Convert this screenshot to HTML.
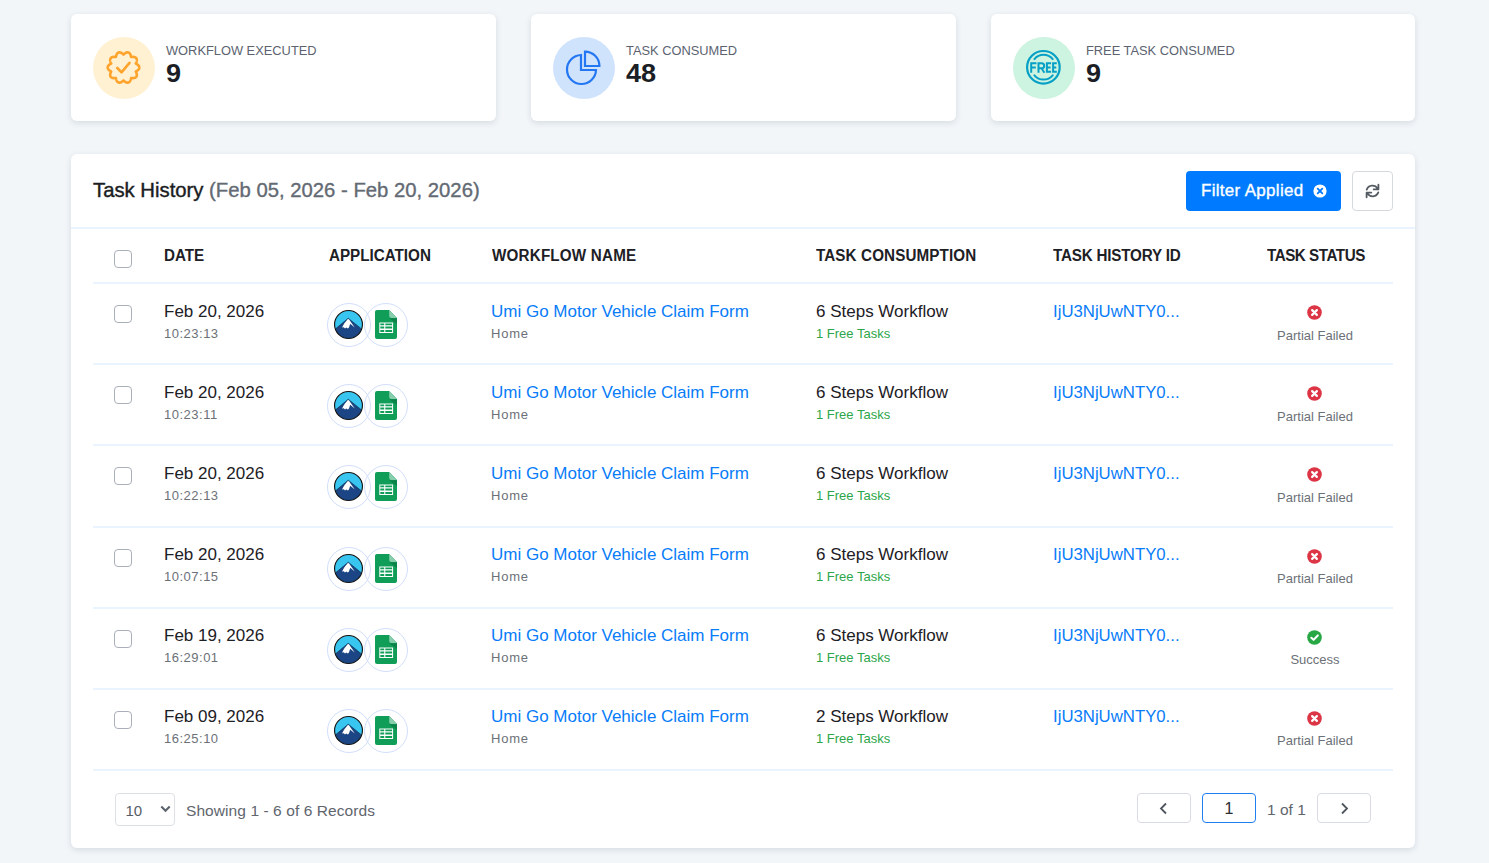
<!DOCTYPE html>
<html><head><meta charset="utf-8"><style>
*{margin:0;padding:0;box-sizing:border-box}
html,body{width:1489px;height:863px;overflow:hidden;background:#f2f6f9;font-family:"Liberation Sans",sans-serif;color:#212529}
.card{position:absolute;background:#fff;border-radius:6px;box-shadow:0 2px 6px rgba(30,45,70,.13)}
.stat{top:14px;width:425px;height:107px}
.ic{position:absolute;left:22px;top:23px;width:62px;height:62px;border-radius:50%}
.ic svg{position:absolute;left:0;top:0}
.lbl{position:absolute;left:95px;top:29px;font-size:12.85px;color:#5b6370;white-space:nowrap}
.val{position:absolute;left:95px;top:45px;transform:scaleX(1.05);transform-origin:0 0;font-size:25.8px;font-weight:bold;color:#1b1e24}
.main{left:71px;top:154px;width:1344px;height:694px}
.title{position:absolute;left:22px;top:24.5px;font-size:20.3px;color:#1a1d22;white-space:nowrap;-webkit-text-stroke:.4px #1a1d22}
.title span{color:#636a73;-webkit-text-stroke:.35px #636a73}
.fbtn{position:absolute;left:1115px;top:17px;width:155px;height:40px;background:#007bff;border-radius:4px;color:#fff;font-size:17px}
.fbtn .tx{position:absolute;left:15px;top:10px;white-space:nowrap;letter-spacing:.3px;-webkit-text-stroke:.35px #fff}
.rbtn{position:absolute;left:1281px;top:17px;width:41px;height:40px;border:1px solid #d6d9de;border-radius:4px}
.hline{position:absolute;left:0;top:73px;width:1344px;height:2px;background:#eaf4fe}
.th{position:absolute;top:93.2px;transform:scaleX(.95);transform-origin:0 0;font-size:16px;font-weight:bold;color:#1d2025;white-space:nowrap}
.cb{position:absolute;width:18px;height:18px;border:1.5px solid #a9b0b9;border-radius:4px;background:#fff}
.row{position:absolute;left:0;width:1344px;height:81px}
.rl{position:absolute;left:22px;width:1300px;height:2px;background:#eaf4fe}
.hdrline{position:absolute;left:22px;top:128px;width:1300px;height:2px;background:#eaf4fe}
.t1{position:absolute;top:19px;font-size:17px;color:#1d2025;white-space:nowrap}
.t2{position:absolute;top:43px;font-size:13px;color:#6c7178;white-space:nowrap}
.tm{letter-spacing:.5px}
.hm{letter-spacing:.8px}
.lnk{color:#087cf9}
.id{font-size:16.75px}
.grn{color:#2ca64a}
.ac{position:absolute;top:20px;width:44px;height:44px;border:1.2px solid #d2defb;border-radius:50%;display:flex;align-items:center;justify-content:center}
.ac svg{display:block}
.ac i{display:block}
.st{position:absolute;left:1236px;top:22px;width:15px;height:15px}
.st svg{display:block}
.stl{position:absolute;left:1144px;width:200px;text-align:center;top:45px;font-size:13px;color:#6c7178}
.sel{position:absolute;left:44px;top:639px;width:60px;height:33px;border:1px solid #dde1e6;border-radius:4px;font-size:15px;color:#565d66}
.pg{position:absolute;top:639px;width:54px;height:30px;border:1px solid #d9dce8;border-radius:4px}
</style></head><body>
<div class="card stat" style="left:71px">
 <div class="ic" style="background:#fff1d2"><svg width="62" height="62" viewBox="0 0 62 62"><g transform="translate(12.5,12.5)"><path d="M18.00 5.10 L18.21 4.93 L18.42 4.73 L18.64 4.53 L18.86 4.33 L19.09 4.13 L19.33 3.95 L19.57 3.77 L19.82 3.60 L20.07 3.44 L20.33 3.30 L20.59 3.18 L20.85 3.07 L21.11 2.99 L21.37 2.92 L21.63 2.87 L21.89 2.85 L22.15 2.84 L22.40 2.87 L22.64 2.91 L22.88 2.97 L23.11 3.06 L23.34 3.17 L23.55 3.30 L23.76 3.45 L23.95 3.63 L24.14 3.82 L24.31 4.02 L24.47 4.25 L24.62 4.49 L24.76 4.74 L24.88 5.01 L24.99 5.28 L25.09 5.56 L25.19 5.85 L25.27 6.14 L25.34 6.44 L25.40 6.73 L25.46 7.02 L25.52 7.30 L25.58 7.56 L25.85 7.54 L26.14 7.51 L26.43 7.48 L26.73 7.45 L27.03 7.42 L27.34 7.41 L27.64 7.41 L27.94 7.42 L28.23 7.44 L28.52 7.48 L28.80 7.53 L29.08 7.60 L29.34 7.68 L29.59 7.78 L29.83 7.90 L30.05 8.03 L30.26 8.18 L30.45 8.34 L30.63 8.52 L30.78 8.71 L30.92 8.92 L31.04 9.14 L31.13 9.37 L31.21 9.62 L31.27 9.87 L31.30 10.13 L31.32 10.40 L31.32 10.68 L31.30 10.96 L31.26 11.24 L31.20 11.53 L31.13 11.82 L31.05 12.11 L30.96 12.39 L30.85 12.68 L30.74 12.96 L30.61 13.23 L30.49 13.50 L30.37 13.76 L30.27 14.01 L30.50 14.16 L30.75 14.30 L31.01 14.44 L31.27 14.59 L31.52 14.75 L31.78 14.92 L32.02 15.10 L32.26 15.28 L32.48 15.47 L32.70 15.67 L32.90 15.88 L33.08 16.10 L33.24 16.32 L33.39 16.55 L33.51 16.78 L33.61 17.02 L33.69 17.26 L33.75 17.50 L33.79 17.75 L33.80 18.00 L33.79 18.25 L33.75 18.50 L33.69 18.74 L33.61 18.98 L33.51 19.22 L33.39 19.45 L33.24 19.68 L33.08 19.90 L32.90 20.12 L32.70 20.33 L32.48 20.53 L32.26 20.72 L32.02 20.90 L31.78 21.08 L31.52 21.25 L31.27 21.41 L31.01 21.56 L30.75 21.70 L30.50 21.84 L30.27 21.99 L30.37 22.24 L30.49 22.50 L30.61 22.77 L30.74 23.04 L30.85 23.32 L30.96 23.61 L31.05 23.89 L31.13 24.18 L31.20 24.47 L31.26 24.76 L31.30 25.04 L31.32 25.32 L31.32 25.60 L31.30 25.87 L31.27 26.13 L31.21 26.38 L31.13 26.63 L31.04 26.86 L30.92 27.08 L30.78 27.29 L30.63 27.48 L30.45 27.66 L30.26 27.82 L30.05 27.97 L29.83 28.10 L29.59 28.22 L29.34 28.32 L29.08 28.40 L28.80 28.47 L28.52 28.52 L28.23 28.56 L27.94 28.58 L27.64 28.59 L27.34 28.59 L27.03 28.58 L26.73 28.55 L26.43 28.52 L26.14 28.49 L25.85 28.46 L25.58 28.44 L25.52 28.70 L25.46 28.98 L25.40 29.27 L25.34 29.56 L25.27 29.86 L25.19 30.15 L25.09 30.44 L24.99 30.72 L24.88 30.99 L24.76 31.26 L24.62 31.51 L24.47 31.75 L24.31 31.98 L24.14 32.18 L23.95 32.37 L23.76 32.55 L23.55 32.70 L23.34 32.83 L23.11 32.94 L22.88 33.03 L22.64 33.09 L22.40 33.13 L22.15 33.16 L21.89 33.15 L21.63 33.13 L21.37 33.08 L21.11 33.01 L20.85 32.93 L20.59 32.82 L20.33 32.70 L20.07 32.56 L19.82 32.40 L19.57 32.23 L19.33 32.05 L19.09 31.87 L18.86 31.67 L18.64 31.47 L18.42 31.27 L18.21 31.07 L18.00 30.90 L17.79 31.07 L17.58 31.27 L17.36 31.47 L17.14 31.67 L16.91 31.87 L16.67 32.05 L16.43 32.23 L16.18 32.40 L15.93 32.56 L15.67 32.70 L15.41 32.82 L15.15 32.93 L14.89 33.01 L14.63 33.08 L14.37 33.13 L14.11 33.15 L13.85 33.16 L13.60 33.13 L13.36 33.09 L13.12 33.03 L12.89 32.94 L12.66 32.83 L12.45 32.70 L12.24 32.55 L12.05 32.37 L11.86 32.18 L11.69 31.98 L11.53 31.75 L11.38 31.51 L11.24 31.26 L11.12 30.99 L11.01 30.72 L10.91 30.44 L10.81 30.15 L10.73 29.86 L10.66 29.56 L10.60 29.27 L10.54 28.98 L10.48 28.70 L10.42 28.44 L10.15 28.46 L9.86 28.49 L9.57 28.52 L9.27 28.55 L8.97 28.58 L8.66 28.59 L8.36 28.59 L8.06 28.58 L7.77 28.56 L7.48 28.52 L7.20 28.47 L6.92 28.40 L6.66 28.32 L6.41 28.22 L6.17 28.10 L5.95 27.97 L5.74 27.82 L5.55 27.66 L5.37 27.48 L5.22 27.29 L5.08 27.08 L4.96 26.86 L4.87 26.63 L4.79 26.38 L4.73 26.13 L4.70 25.87 L4.68 25.60 L4.68 25.32 L4.70 25.04 L4.74 24.76 L4.80 24.47 L4.87 24.18 L4.95 23.89 L5.04 23.61 L5.15 23.32 L5.26 23.04 L5.39 22.77 L5.51 22.50 L5.63 22.24 L5.73 21.99 L5.50 21.84 L5.25 21.70 L4.99 21.56 L4.73 21.41 L4.48 21.25 L4.22 21.08 L3.98 20.90 L3.74 20.72 L3.52 20.53 L3.30 20.33 L3.10 20.12 L2.92 19.90 L2.76 19.68 L2.61 19.45 L2.49 19.22 L2.39 18.98 L2.31 18.74 L2.25 18.50 L2.21 18.25 L2.20 18.00 L2.21 17.75 L2.25 17.50 L2.31 17.26 L2.39 17.02 L2.49 16.78 L2.61 16.55 L2.76 16.32 L2.92 16.10 L3.10 15.88 L3.30 15.67 L3.52 15.47 L3.74 15.28 L3.98 15.10 L4.22 14.92 L4.48 14.75 L4.73 14.59 L4.99 14.44 L5.25 14.30 L5.50 14.16 L5.73 14.01 L5.63 13.76 L5.51 13.50 L5.39 13.23 L5.26 12.96 L5.15 12.68 L5.04 12.39 L4.95 12.11 L4.87 11.82 L4.80 11.53 L4.74 11.24 L4.70 10.96 L4.68 10.68 L4.68 10.40 L4.70 10.13 L4.73 9.87 L4.79 9.62 L4.87 9.37 L4.96 9.14 L5.08 8.92 L5.22 8.71 L5.37 8.52 L5.55 8.34 L5.74 8.18 L5.95 8.03 L6.17 7.90 L6.41 7.78 L6.66 7.68 L6.92 7.60 L7.20 7.53 L7.48 7.48 L7.77 7.44 L8.06 7.42 L8.36 7.41 L8.66 7.41 L8.97 7.42 L9.27 7.45 L9.57 7.48 L9.86 7.51 L10.15 7.54 L10.42 7.56 L10.48 7.30 L10.54 7.02 L10.60 6.73 L10.66 6.44 L10.73 6.14 L10.81 5.85 L10.91 5.56 L11.01 5.28 L11.12 5.01 L11.24 4.74 L11.38 4.49 L11.53 4.25 L11.69 4.02 L11.86 3.82 L12.05 3.63 L12.24 3.45 L12.45 3.30 L12.66 3.17 L12.89 3.06 L13.12 2.97 L13.36 2.91 L13.60 2.87 L13.85 2.84 L14.11 2.85 L14.37 2.87 L14.63 2.92 L14.89 2.99 L15.15 3.07 L15.41 3.18 L15.67 3.30 L15.93 3.44 L16.18 3.60 L16.43 3.77 L16.67 3.95 L16.91 4.13 L17.14 4.33 L17.36 4.53 L17.58 4.73 L17.79 4.93 L18.00 5.10Z" fill="none" stroke="#fea42c" stroke-width="2.6" stroke-linejoin="round"/><path d="M11.8 18.5 L16 22.9 L24 13.3" fill="none" stroke="#fea42c" stroke-width="2.6" stroke-linecap="round" stroke-linejoin="round"/></g></svg></div>
 <div class="lbl">WORKFLOW EXECUTED</div><div class="val">9</div>
</div>
<div class="card stat" style="left:531px">
 <div class="ic" style="background:#d0e3fd"><svg width="62" height="62" viewBox="0 0 62 62"><path d="M28 18 A14.5 14.5 0 1 0 43 33 H28 Z" fill="none" stroke="#2477f2" stroke-width="2.2" stroke-linejoin="miter"/><path d="M32 14.6 A14.4 14.4 0 0 1 46.4 29 H32 Z" fill="none" stroke="#2477f2" stroke-width="2.2"/></svg></div>
 <div class="lbl">TASK CONSUMED</div><div class="val">48</div>
</div>
<div class="card stat" style="left:991px;width:424px">
 <div class="ic" style="background:#cdf3e1"><svg width="62" height="62" viewBox="0 0 62 62"><circle cx="30.4" cy="30.3" r="16.3" fill="none" stroke="#06a0c6" stroke-width="2.2"/><path d="M21.4 22.1 A12 12 0 0 1 39.7 22.1" fill="none" stroke="#06a0c6" stroke-width="2" stroke-linecap="round"/><path d="M21.4 38.3 A12 12 0 0 0 39.7 38.3" fill="none" stroke="#06a0c6" stroke-width="2" stroke-linecap="round"/><path d="M18.2 35.7 V26.2 H23.5 M18.2 30.6 H22.8 M25.5 35.7 V26.2 H28.6 Q31.2 26.2 31.2 28.7 Q31.2 31.2 28.6 31.2 H25.5 M28.6 31.2 L31.4 35.7 M38.1 26.2 H33.9 V34.7 H38.1 M33.9 30.5 H37.6 M43.8 26.2 H40.1 V34.7 H43.8 M40.1 30.5 H43.3" fill="none" stroke="#06a0c6" stroke-width="2"/></svg></div>
 <div class="lbl">FREE TASK CONSUMED</div><div class="val">9</div>
</div>
<div class="card main">
 <div class="title">Task History <span>(Feb 05, 2026 - Feb 20, 2026)</span></div>
 <div class="fbtn"><span class="tx">Filter Applied</span><svg style="position:absolute;left:127px;top:13px" width="14" height="14" viewBox="0 0 14 14"><circle cx="7" cy="7" r="6.6" fill="#fff"/><path d="M4.7 4.7 L9.3 9.3 M9.3 4.7 L4.7 9.3" stroke="#007bff" stroke-width="1.8" stroke-linecap="round"/></svg></div>
 <div class="rbtn"><svg style="position:absolute;left:7px;top:6px" width="26" height="26" viewBox="0 0 26 26"><path d="M6.7 11.6 A6.1 6.1 0 0 1 17.6 10.6 M18.4 6.7 V11.4 H13.7 M18.3 14.4 A6.1 6.1 0 0 1 7.4 15.4 M6.6 19.3 V14.6 H11.3" fill="none" stroke="#555b63" stroke-width="1.8" stroke-linecap="round" stroke-linejoin="round"/></svg></div>
 <div class="hline"></div>
 <div class="cb" style="left:43px;top:96px"></div>
 <div class="th" style="left:93px">DATE</div>
 <div class="th" style="left:258px">APPLICATION</div>
 <div class="th" style="left:421px;letter-spacing:.2px">WORKFLOW NAME</div>
 <div class="th" style="left:745px;letter-spacing:.12px">TASK CONSUMPTION</div>
 <div class="th" style="left:982px;letter-spacing:-.2px">TASK HISTORY ID</div>
 <div class="th" style="left:1196px;letter-spacing:-.5px">TASK STATUS</div>
 <div class="hdrline"></div>
</div>
<div style="position:absolute;left:71px;top:0;width:1344px;height:863px">
<div class="rl" style="top:363px"></div><div class="row" style="top:283px">
<div class="cb" style="left:43px;top:22px"></div>
<div class="t1" style="left:93px">Feb 20, 2026</div><div class="t2 tm" style="left:93px">10:23:13</div>
<span class="ac" style="left:255.75px;top:20px"><i style="position:relative;left:-.6px;top:-.9px"><svg width="29" height="29" viewBox="0 0 28.5 28.5"><defs><clipPath id="mc0"><circle cx="14.25" cy="14.25" r="13.6"/></clipPath></defs><g clip-path="url(#mc0)"><rect width="29" height="29" fill="#38c6f1"/><path d="M-1 20.6 L14 8.1 L29.5 20.6 V30 H-1Z" fill="#1b4584"/><path d="M-1 20.6 L14 8.1 L29.5 20.6" fill="none" stroke="#0d2540" stroke-width=".6"/><path d="M13.8 8.6 L10.4 12.8 L9.2 14.7 L7.9 17.3 L9.6 16.9 L10.8 18.1 L12.0 17.1 L13.6 18.3 L14.7 17.3 L15.9 13.5 L18.3 15.5 L20.4 17.2 L16.7 12.0 L15.1 9.6Z" fill="#fff"/></g><circle cx="14.25" cy="14.25" r="13.7" fill="none" stroke="#111" stroke-width="1.1"/></svg></i></span><span class="ac" style="left:293.1px;top:20px"><i style="position:relative;left:-.6px;top:-.9px"><svg width="22" height="29" viewBox="0 0 22 29"><path d="M2 0 H14.2 L22 7.9 V27 a2 2 0 0 1 -2 2 H2 a2 2 0 0 1 -2 -2 V2 a2 2 0 0 1 2 -2Z" fill="#0f9d58"/><path d="M14.2 0 L22 7.9 H16.2 a2 2 0 0 1 -2 -2Z" fill="#87ceac"/><path d="M14.2 8.3 L22 14 V8.3Z" fill="#0b7a44" opacity=".75"/><path d="M4.3 12.4 H18.1 V23 H4.3Z M5.3 13.6 V15.3 H9.2 V13.6Z M10.3 13.6 V15.3 H17.1 V13.6Z M5.3 16.6 V18.6 H9.2 V16.6Z M10.3 16.6 V18.6 H17.1 V16.6Z M5.3 19.9 V21.9 H9.2 V19.9Z M10.3 19.9 V21.9 H17.1 V19.9Z" fill="#fff" fill-rule="evenodd"/></svg></i></span>
<div class="t1 lnk" style="left:420px">Umi Go Motor Vehicle Claim Form</div><div class="t2 hm" style="left:420px">Home</div>
<div class="t1" style="left:745px">6 Steps Workflow</div><div class="t2 grn" style="left:745px">1 Free Tasks</div>
<div class="t1 lnk id" style="left:982px">IjU3NjUwNTY0...</div>
<div class="st" style="top:22px"><svg width="15" height="15" viewBox="0 0 16 16"><circle cx="8" cy="8" r="7.8" fill="#dc3545"/><path d="M5.5 5.5 L10.5 10.5 M10.5 5.5 L5.5 10.5" stroke="#fff" stroke-width="2.4" stroke-linecap="round"/></svg></div><div class="stl">Partial Failed</div>
</div>
<div class="rl" style="top:444px"></div><div class="row" style="top:364px">
<div class="cb" style="left:43px;top:22px"></div>
<div class="t1" style="left:93px">Feb 20, 2026</div><div class="t2 tm" style="left:93px">10:23:11</div>
<span class="ac" style="left:255.75px;top:20px"><i style="position:relative;left:-.6px;top:-.9px"><svg width="29" height="29" viewBox="0 0 28.5 28.5"><defs><clipPath id="mc1"><circle cx="14.25" cy="14.25" r="13.6"/></clipPath></defs><g clip-path="url(#mc1)"><rect width="29" height="29" fill="#38c6f1"/><path d="M-1 20.6 L14 8.1 L29.5 20.6 V30 H-1Z" fill="#1b4584"/><path d="M-1 20.6 L14 8.1 L29.5 20.6" fill="none" stroke="#0d2540" stroke-width=".6"/><path d="M13.8 8.6 L10.4 12.8 L9.2 14.7 L7.9 17.3 L9.6 16.9 L10.8 18.1 L12.0 17.1 L13.6 18.3 L14.7 17.3 L15.9 13.5 L18.3 15.5 L20.4 17.2 L16.7 12.0 L15.1 9.6Z" fill="#fff"/></g><circle cx="14.25" cy="14.25" r="13.7" fill="none" stroke="#111" stroke-width="1.1"/></svg></i></span><span class="ac" style="left:293.1px;top:20px"><i style="position:relative;left:-.6px;top:-.9px"><svg width="22" height="29" viewBox="0 0 22 29"><path d="M2 0 H14.2 L22 7.9 V27 a2 2 0 0 1 -2 2 H2 a2 2 0 0 1 -2 -2 V2 a2 2 0 0 1 2 -2Z" fill="#0f9d58"/><path d="M14.2 0 L22 7.9 H16.2 a2 2 0 0 1 -2 -2Z" fill="#87ceac"/><path d="M14.2 8.3 L22 14 V8.3Z" fill="#0b7a44" opacity=".75"/><path d="M4.3 12.4 H18.1 V23 H4.3Z M5.3 13.6 V15.3 H9.2 V13.6Z M10.3 13.6 V15.3 H17.1 V13.6Z M5.3 16.6 V18.6 H9.2 V16.6Z M10.3 16.6 V18.6 H17.1 V16.6Z M5.3 19.9 V21.9 H9.2 V19.9Z M10.3 19.9 V21.9 H17.1 V19.9Z" fill="#fff" fill-rule="evenodd"/></svg></i></span>
<div class="t1 lnk" style="left:420px">Umi Go Motor Vehicle Claim Form</div><div class="t2 hm" style="left:420px">Home</div>
<div class="t1" style="left:745px">6 Steps Workflow</div><div class="t2 grn" style="left:745px">1 Free Tasks</div>
<div class="t1 lnk id" style="left:982px">IjU3NjUwNTY0...</div>
<div class="st" style="top:22px"><svg width="15" height="15" viewBox="0 0 16 16"><circle cx="8" cy="8" r="7.8" fill="#dc3545"/><path d="M5.5 5.5 L10.5 10.5 M10.5 5.5 L5.5 10.5" stroke="#fff" stroke-width="2.4" stroke-linecap="round"/></svg></div><div class="stl">Partial Failed</div>
</div>
<div class="rl" style="top:526px"></div><div class="row" style="top:445px">
<div class="cb" style="left:43px;top:22px"></div>
<div class="t1" style="left:93px">Feb 20, 2026</div><div class="t2 tm" style="left:93px">10:22:13</div>
<span class="ac" style="left:255.75px;top:20px"><i style="position:relative;left:-.6px;top:-.9px"><svg width="29" height="29" viewBox="0 0 28.5 28.5"><defs><clipPath id="mc2"><circle cx="14.25" cy="14.25" r="13.6"/></clipPath></defs><g clip-path="url(#mc2)"><rect width="29" height="29" fill="#38c6f1"/><path d="M-1 20.6 L14 8.1 L29.5 20.6 V30 H-1Z" fill="#1b4584"/><path d="M-1 20.6 L14 8.1 L29.5 20.6" fill="none" stroke="#0d2540" stroke-width=".6"/><path d="M13.8 8.6 L10.4 12.8 L9.2 14.7 L7.9 17.3 L9.6 16.9 L10.8 18.1 L12.0 17.1 L13.6 18.3 L14.7 17.3 L15.9 13.5 L18.3 15.5 L20.4 17.2 L16.7 12.0 L15.1 9.6Z" fill="#fff"/></g><circle cx="14.25" cy="14.25" r="13.7" fill="none" stroke="#111" stroke-width="1.1"/></svg></i></span><span class="ac" style="left:293.1px;top:20px"><i style="position:relative;left:-.6px;top:-.9px"><svg width="22" height="29" viewBox="0 0 22 29"><path d="M2 0 H14.2 L22 7.9 V27 a2 2 0 0 1 -2 2 H2 a2 2 0 0 1 -2 -2 V2 a2 2 0 0 1 2 -2Z" fill="#0f9d58"/><path d="M14.2 0 L22 7.9 H16.2 a2 2 0 0 1 -2 -2Z" fill="#87ceac"/><path d="M14.2 8.3 L22 14 V8.3Z" fill="#0b7a44" opacity=".75"/><path d="M4.3 12.4 H18.1 V23 H4.3Z M5.3 13.6 V15.3 H9.2 V13.6Z M10.3 13.6 V15.3 H17.1 V13.6Z M5.3 16.6 V18.6 H9.2 V16.6Z M10.3 16.6 V18.6 H17.1 V16.6Z M5.3 19.9 V21.9 H9.2 V19.9Z M10.3 19.9 V21.9 H17.1 V19.9Z" fill="#fff" fill-rule="evenodd"/></svg></i></span>
<div class="t1 lnk" style="left:420px">Umi Go Motor Vehicle Claim Form</div><div class="t2 hm" style="left:420px">Home</div>
<div class="t1" style="left:745px">6 Steps Workflow</div><div class="t2 grn" style="left:745px">1 Free Tasks</div>
<div class="t1 lnk id" style="left:982px">IjU3NjUwNTY0...</div>
<div class="st" style="top:22px"><svg width="15" height="15" viewBox="0 0 16 16"><circle cx="8" cy="8" r="7.8" fill="#dc3545"/><path d="M5.5 5.5 L10.5 10.5 M10.5 5.5 L5.5 10.5" stroke="#fff" stroke-width="2.4" stroke-linecap="round"/></svg></div><div class="stl">Partial Failed</div>
</div>
<div class="rl" style="top:607px"></div><div class="row" style="top:526px">
<div class="cb" style="left:43px;top:23px"></div>
<div class="t1" style="left:93px">Feb 20, 2026</div><div class="t2 tm" style="left:93px">10:07:15</div>
<span class="ac" style="left:255.75px;top:21px"><i style="position:relative;left:-.6px;top:-.9px"><svg width="29" height="29" viewBox="0 0 28.5 28.5"><defs><clipPath id="mc3"><circle cx="14.25" cy="14.25" r="13.6"/></clipPath></defs><g clip-path="url(#mc3)"><rect width="29" height="29" fill="#38c6f1"/><path d="M-1 20.6 L14 8.1 L29.5 20.6 V30 H-1Z" fill="#1b4584"/><path d="M-1 20.6 L14 8.1 L29.5 20.6" fill="none" stroke="#0d2540" stroke-width=".6"/><path d="M13.8 8.6 L10.4 12.8 L9.2 14.7 L7.9 17.3 L9.6 16.9 L10.8 18.1 L12.0 17.1 L13.6 18.3 L14.7 17.3 L15.9 13.5 L18.3 15.5 L20.4 17.2 L16.7 12.0 L15.1 9.6Z" fill="#fff"/></g><circle cx="14.25" cy="14.25" r="13.7" fill="none" stroke="#111" stroke-width="1.1"/></svg></i></span><span class="ac" style="left:293.1px;top:21px"><i style="position:relative;left:-.6px;top:-.9px"><svg width="22" height="29" viewBox="0 0 22 29"><path d="M2 0 H14.2 L22 7.9 V27 a2 2 0 0 1 -2 2 H2 a2 2 0 0 1 -2 -2 V2 a2 2 0 0 1 2 -2Z" fill="#0f9d58"/><path d="M14.2 0 L22 7.9 H16.2 a2 2 0 0 1 -2 -2Z" fill="#87ceac"/><path d="M14.2 8.3 L22 14 V8.3Z" fill="#0b7a44" opacity=".75"/><path d="M4.3 12.4 H18.1 V23 H4.3Z M5.3 13.6 V15.3 H9.2 V13.6Z M10.3 13.6 V15.3 H17.1 V13.6Z M5.3 16.6 V18.6 H9.2 V16.6Z M10.3 16.6 V18.6 H17.1 V16.6Z M5.3 19.9 V21.9 H9.2 V19.9Z M10.3 19.9 V21.9 H17.1 V19.9Z" fill="#fff" fill-rule="evenodd"/></svg></i></span>
<div class="t1 lnk" style="left:420px">Umi Go Motor Vehicle Claim Form</div><div class="t2 hm" style="left:420px">Home</div>
<div class="t1" style="left:745px">6 Steps Workflow</div><div class="t2 grn" style="left:745px">1 Free Tasks</div>
<div class="t1 lnk id" style="left:982px">IjU3NjUwNTY0...</div>
<div class="st" style="top:23px"><svg width="15" height="15" viewBox="0 0 16 16"><circle cx="8" cy="8" r="7.8" fill="#dc3545"/><path d="M5.5 5.5 L10.5 10.5 M10.5 5.5 L5.5 10.5" stroke="#fff" stroke-width="2.4" stroke-linecap="round"/></svg></div><div class="stl">Partial Failed</div>
</div>
<div class="rl" style="top:688px"></div><div class="row" style="top:607px">
<div class="cb" style="left:43px;top:23px"></div>
<div class="t1" style="left:93px">Feb 19, 2026</div><div class="t2 tm" style="left:93px">16:29:01</div>
<span class="ac" style="left:255.75px;top:21px"><i style="position:relative;left:-.6px;top:-.9px"><svg width="29" height="29" viewBox="0 0 28.5 28.5"><defs><clipPath id="mc4"><circle cx="14.25" cy="14.25" r="13.6"/></clipPath></defs><g clip-path="url(#mc4)"><rect width="29" height="29" fill="#38c6f1"/><path d="M-1 20.6 L14 8.1 L29.5 20.6 V30 H-1Z" fill="#1b4584"/><path d="M-1 20.6 L14 8.1 L29.5 20.6" fill="none" stroke="#0d2540" stroke-width=".6"/><path d="M13.8 8.6 L10.4 12.8 L9.2 14.7 L7.9 17.3 L9.6 16.9 L10.8 18.1 L12.0 17.1 L13.6 18.3 L14.7 17.3 L15.9 13.5 L18.3 15.5 L20.4 17.2 L16.7 12.0 L15.1 9.6Z" fill="#fff"/></g><circle cx="14.25" cy="14.25" r="13.7" fill="none" stroke="#111" stroke-width="1.1"/></svg></i></span><span class="ac" style="left:293.1px;top:21px"><i style="position:relative;left:-.6px;top:-.9px"><svg width="22" height="29" viewBox="0 0 22 29"><path d="M2 0 H14.2 L22 7.9 V27 a2 2 0 0 1 -2 2 H2 a2 2 0 0 1 -2 -2 V2 a2 2 0 0 1 2 -2Z" fill="#0f9d58"/><path d="M14.2 0 L22 7.9 H16.2 a2 2 0 0 1 -2 -2Z" fill="#87ceac"/><path d="M14.2 8.3 L22 14 V8.3Z" fill="#0b7a44" opacity=".75"/><path d="M4.3 12.4 H18.1 V23 H4.3Z M5.3 13.6 V15.3 H9.2 V13.6Z M10.3 13.6 V15.3 H17.1 V13.6Z M5.3 16.6 V18.6 H9.2 V16.6Z M10.3 16.6 V18.6 H17.1 V16.6Z M5.3 19.9 V21.9 H9.2 V19.9Z M10.3 19.9 V21.9 H17.1 V19.9Z" fill="#fff" fill-rule="evenodd"/></svg></i></span>
<div class="t1 lnk" style="left:420px">Umi Go Motor Vehicle Claim Form</div><div class="t2 hm" style="left:420px">Home</div>
<div class="t1" style="left:745px">6 Steps Workflow</div><div class="t2 grn" style="left:745px">1 Free Tasks</div>
<div class="t1 lnk id" style="left:982px">IjU3NjUwNTY0...</div>
<div class="st" style="top:23px"><svg width="15" height="15" viewBox="0 0 16 16"><circle cx="8" cy="8" r="7.8" fill="#28a745"/><path d="M4.6 8.3 L7 10.5 L11.5 5.8" stroke="#fff" stroke-width="2.2" fill="none" stroke-linecap="round" stroke-linejoin="round"/></svg></div><div class="stl">Success</div>
</div>
<div class="rl" style="top:769px"></div><div class="row" style="top:688px">
<div class="cb" style="left:43px;top:23px"></div>
<div class="t1" style="left:93px">Feb 09, 2026</div><div class="t2 tm" style="left:93px">16:25:10</div>
<span class="ac" style="left:255.75px;top:21px"><i style="position:relative;left:-.6px;top:-.9px"><svg width="29" height="29" viewBox="0 0 28.5 28.5"><defs><clipPath id="mc5"><circle cx="14.25" cy="14.25" r="13.6"/></clipPath></defs><g clip-path="url(#mc5)"><rect width="29" height="29" fill="#38c6f1"/><path d="M-1 20.6 L14 8.1 L29.5 20.6 V30 H-1Z" fill="#1b4584"/><path d="M-1 20.6 L14 8.1 L29.5 20.6" fill="none" stroke="#0d2540" stroke-width=".6"/><path d="M13.8 8.6 L10.4 12.8 L9.2 14.7 L7.9 17.3 L9.6 16.9 L10.8 18.1 L12.0 17.1 L13.6 18.3 L14.7 17.3 L15.9 13.5 L18.3 15.5 L20.4 17.2 L16.7 12.0 L15.1 9.6Z" fill="#fff"/></g><circle cx="14.25" cy="14.25" r="13.7" fill="none" stroke="#111" stroke-width="1.1"/></svg></i></span><span class="ac" style="left:293.1px;top:21px"><i style="position:relative;left:-.6px;top:-.9px"><svg width="22" height="29" viewBox="0 0 22 29"><path d="M2 0 H14.2 L22 7.9 V27 a2 2 0 0 1 -2 2 H2 a2 2 0 0 1 -2 -2 V2 a2 2 0 0 1 2 -2Z" fill="#0f9d58"/><path d="M14.2 0 L22 7.9 H16.2 a2 2 0 0 1 -2 -2Z" fill="#87ceac"/><path d="M14.2 8.3 L22 14 V8.3Z" fill="#0b7a44" opacity=".75"/><path d="M4.3 12.4 H18.1 V23 H4.3Z M5.3 13.6 V15.3 H9.2 V13.6Z M10.3 13.6 V15.3 H17.1 V13.6Z M5.3 16.6 V18.6 H9.2 V16.6Z M10.3 16.6 V18.6 H17.1 V16.6Z M5.3 19.9 V21.9 H9.2 V19.9Z M10.3 19.9 V21.9 H17.1 V19.9Z" fill="#fff" fill-rule="evenodd"/></svg></i></span>
<div class="t1 lnk" style="left:420px">Umi Go Motor Vehicle Claim Form</div><div class="t2 hm" style="left:420px">Home</div>
<div class="t1" style="left:745px">2 Steps Workflow</div><div class="t2 grn" style="left:745px">1 Free Tasks</div>
<div class="t1 lnk id" style="left:982px">IjU3NjUwNTY0...</div>
<div class="st" style="top:23px"><svg width="15" height="15" viewBox="0 0 16 16"><circle cx="8" cy="8" r="7.8" fill="#dc3545"/><path d="M5.5 5.5 L10.5 10.5 M10.5 5.5 L5.5 10.5" stroke="#fff" stroke-width="2.4" stroke-linecap="round"/></svg></div><div class="stl">Partial Failed</div>
</div>

</div>
<div style="position:absolute;left:71px;top:154px;width:1344px;height:694px">
 <div class="sel"><span style="position:absolute;left:9.5px;top:7.5px">10</span><svg style="position:absolute;left:43.5px;top:10.7px" width="11" height="8" viewBox="0 0 11 8"><path d="M1.3 1.6 L5.5 5.8 L9.7 1.6" fill="none" stroke="#5b646d" stroke-width="2.1"/></svg></div>
 <div style="position:absolute;left:115px;top:647.5px;letter-spacing:.08px;font-size:15.5px;color:#5f656d;white-space:nowrap">Showing 1 - 6 of 6 Records</div>
 <div class="pg" style="left:1066px"><svg style="position:absolute;left:21px;top:8px" width="9" height="13" viewBox="0 0 9 13"><path d="M7 1.5 L2 6.5 L7 11.5" fill="none" stroke="#50565e" stroke-width="1.8"/></svg></div>
 <div class="pg" style="left:1131px;width:54px;border-color:#1f7ff0;"><span style="position:absolute;left:0;width:52px;text-align:center;top:6px;font-size:16px;color:#2a2d31">1</span></div>
 <div style="position:absolute;left:1196px;top:646.5px;font-size:15.5px;color:#5f656d;white-space:nowrap">1 of 1</div>
 <div class="pg" style="left:1246px"><svg style="position:absolute;left:22px;top:8px" width="9" height="13" viewBox="0 0 9 13"><path d="M2 1.5 L7 6.5 L2 11.5" fill="none" stroke="#50565e" stroke-width="1.8"/></svg></div>
</div>
</body></html>
